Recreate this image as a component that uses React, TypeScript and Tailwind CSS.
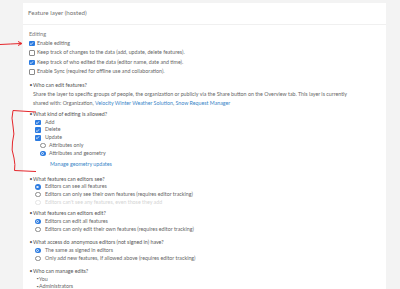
import React from 'react';

const font = { fontFamily: 'Lato, "Noto Sans", sans-serif' };

function Check({ checked }: { checked?: boolean }) {
  if (checked) {
    return (
      <span className="flex h-[5.5px] w-[5.5px] shrink-0 items-center justify-center rounded-[1px] bg-[#2c7be0]">
        <svg viewBox="0 0 10 10" className="h-[5px] w-[5px]">
          <path d="M2 5.2 L4.2 7.3 L8 2.8" fill="none" stroke="#fff" strokeWidth="1.6" />
        </svg>
      </span>
    );
  }
  return <span className="h-[5.5px] w-[5.5px] shrink-0 rounded-[1px] border-[0.8px] border-[#8a8a8a] bg-white" />;
}

function Radio({ on, faded }: { on?: boolean; faded?: boolean }) {
  if (on) {
    return (
      <span className="flex h-[5.5px] w-[5.5px] shrink-0 items-center justify-center rounded-full bg-[#2c7be0]">
        <span className="h-[2.6px] w-[2.6px] rounded-full border-[0.6px] border-[#dbe8fb] bg-[#2c7be0]" />
      </span>
    );
  }
  return (
    <span
      className={`h-[5.5px] w-[5.5px] shrink-0 rounded-full border-[0.8px] bg-white ${
        faded ? 'border-[#e4e4e4]' : 'border-[#8a8a8a]'
      }`}
    />
  );
}

function Row({ children, h = 'h-[8px]', pl = 'pl-[35px]' }: { children: React.ReactNode; h?: string; pl?: string }) {
  return <div className={`flex items-center gap-[2.5px] ${h} ${pl}`}>{children}</div>;
}

function Bullet({ children, h = 'h-[8px]', mt }: { children: React.ReactNode; h?: string; mt: string }) {
  return (
    <div className={`flex items-center ${h} ${mt} pl-[29.5px] text-[#555]`}>
      <span className="w-[3.5px] text-[5px]">•</span>
      <span>{children}</span>
    </div>
  );
}

export default function App() {
  return (
    <div className="relative h-[289px] w-[400px] overflow-hidden bg-[#f3f3f3]" style={font}>
      <div className="ml-[23px] mt-[3px] h-[286px] w-[363px] bg-white text-[5.3px] leading-none text-[#666]">
        <div className="flex h-[22px] items-center border-b border-[#f0f0f0] pl-[5px] text-[6.2px] text-[#707070]">
          Feature layer (hosted)
        </div>

        <div className="-ml-[23px]">
          <div className="mt-[4.5px] flex h-[9.5px] items-center pl-[29px] text-[5.6px] text-[#7a7a7a]">Editing</div>
          <Row h="h-[9.4px]" pl="pl-[29px]">
            <Check checked />
            <span>Enable editing</span>
          </Row>
          <Row h="h-[9.4px]" pl="pl-[29px]">
            <Check />
            <span>Keep track of changes to the data (add, update, delete features).</span>
          </Row>
          <Row h="h-[9.4px]" pl="pl-[29px]">
            <Check checked />
            <span>Keep track of who edited the data (editor name, date and time).</span>
          </Row>
          <Row h="h-[9.4px]" pl="pl-[29px]">
            <Check />
            <span>Enable Sync (required for offline use and collaboration).</span>
          </Row>

          <Bullet mt="mt-[5px]" h="h-[8.5px]">Who can edit features?</Bullet>
          <div className="pl-[33px] pr-[16px] leading-[8.5px]">
            <div>
              Share the layer to specific groups of people, the organization or publicly via the Share button on the
              Overview tab. This layer is currently
            </div>
            <div>
              shared with: Organization, <span className="text-[#3a86c8]">Velocity Winter Weather Solution</span>,{' '}
              <span className="text-[#3a86c8]">Snow Request Manager</span>
            </div>
          </div>

          <Bullet mt="mt-[3.5px]" h="h-[7.8px]">What kind of editing is allowed?</Bullet>
          <Row h="h-[7.8px]">
            <Check checked />
            <span className="ml-[2px]">Add</span>
          </Row>
          <Row h="h-[7.8px]">
            <Check checked />
            <span className="ml-[2px]">Delete</span>
          </Row>
          <Row h="h-[7.8px]">
            <Check checked />
            <span className="ml-[2px]">Update</span>
          </Row>
          <Row h="h-[7.8px]" pl="pl-[40px]">
            <Radio />
            <span className="ml-[1px]">Attributes only</span>
          </Row>
          <Row h="h-[7.8px]" pl="pl-[40px]">
            <Radio on />
            <span className="ml-[1px]">Attributes and geometry</span>
          </Row>
          <div className="mt-[3px] flex h-[8px] items-center pl-[50px] text-[#3a86c8]">Manage geometry updates</div>

          <Bullet mt="mt-[7px]" h="h-[7.7px]">What features can editors see?</Bullet>
          <Row h="h-[7.7px]">
            <Radio on />
            <span className="ml-[2px]">Editors can see all features</span>
          </Row>
          <Row h="h-[7.7px]">
            <Radio />
            <span className="ml-[2px]">Editors can only see their own features (requires editor tracking)</span>
          </Row>
          <Row h="h-[7.7px]">
            <Radio faded />
            <span className="ml-[2px] text-[#d4d4d4]">Editors can't see any features, even those they add</span>
          </Row>

          <Bullet mt="mt-[3.4px]">What features can editors edit?</Bullet>
          <Row>
            <Radio on />
            <span className="ml-[2px]">Editors can edit all features</span>
          </Row>
          <Row>
            <Radio />
            <span className="ml-[2px]">Editors can only edit their own features (requires editor tracking)</span>
          </Row>

          <Bullet mt="mt-[5px]">What access do anonymous editors (not signed in) have?</Bullet>
          <Row>
            <Radio on />
            <span className="ml-[2px]">The same as signed in editors</span>
          </Row>
          <Row>
            <Radio />
            <span className="ml-[2px]">Only add new features, if allowed above (requires editor tracking)</span>
          </Row>

          <Bullet mt="mt-[5px]" h="h-[8px]">Who can manage edits?</Bullet>
          <div className="flex h-[7.5px] items-center pl-[36.5px]">
            <span className="w-[2.5px] text-[4px]">•</span>You
          </div>
          <div className="flex h-[7.5px] items-center pl-[36.5px]">
            <span className="w-[2.5px] text-[4px]">•</span>Administrators
          </div>
        </div>
      </div>

      {/* red annotations */}
      <svg className="absolute left-0 top-0" width="40" height="180" viewBox="0 0 40 180">
        <path d="M0 44.5 Q10 44 21 43.5" fill="none" stroke="#e5262b" strokeWidth="1" />
        <path d="M18 41.5 L22 43.5 L18 45.5" fill="none" stroke="#e5262b" strokeWidth="1" />
        <path
          d="M36 112 L13 110.5 Q11 118 13 126 Q15 134 12.5 142 Q11 150 14 158 Q15.5 165 14.5 170.5 L36 171.5"
          fill="none"
          stroke="#e5262b"
          strokeWidth="1"
        />
      </svg>
    </div>
  );
}
